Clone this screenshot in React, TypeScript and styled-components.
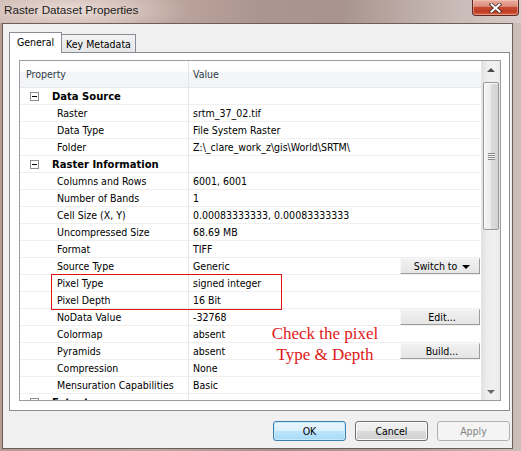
import React from 'react';
import styled, { createGlobalStyle, css } from 'styled-components';

type PropRow = { kind: 'prop'; name: string; value: string; action?: string; menu?: boolean };
type CatRow = { kind: 'cat'; label: string };
type GridRow = PropRow | CatRow;

const ROWS: GridRow[] = [
  { kind: 'cat', label: 'Data Source' },
  { kind: 'prop', name: 'Raster', value: 'srtm_37_02.tif' },
  { kind: 'prop', name: 'Data Type', value: 'File System Raster' },
  { kind: 'prop', name: 'Folder', value: 'Z:\\_clare_work_z\\gis\\World\\SRTM\\' },
  { kind: 'cat', label: 'Raster Information' },
  { kind: 'prop', name: 'Columns and Rows', value: '6001, 6001' },
  { kind: 'prop', name: 'Number of Bands', value: '1' },
  { kind: 'prop', name: 'Cell Size (X, Y)', value: '0.00083333333, 0.00083333333' },
  { kind: 'prop', name: 'Uncompressed Size', value: '68.69 MB' },
  { kind: 'prop', name: 'Format', value: 'TIFF' },
  { kind: 'prop', name: 'Source Type', value: 'Generic', action: 'Switch to', menu: true },
  { kind: 'prop', name: 'Pixel Type', value: 'signed integer' },
  { kind: 'prop', name: 'Pixel Depth', value: '16 Bit' },
  { kind: 'prop', name: 'NoData Value', value: '-32768', action: 'Edit...' },
  { kind: 'prop', name: 'Colormap', value: 'absent' },
  { kind: 'prop', name: 'Pyramids', value: 'absent', action: 'Build...' },
  { kind: 'prop', name: 'Compression', value: 'None' },
  { kind: 'prop', name: 'Mensuration Capabilities', value: 'Basic' },
  { kind: 'cat', label: 'Extent' },
];

const GlobalStyle = createGlobalStyle`
  html, body { margin: 0; padding: 0; }
  body {
    width: 521px;
    height: 451px;
    overflow: hidden;
    font-family: "DejaVu Sans Condensed", "Liberation Sans", Arial, sans-serif;
    font-size: 10.5px;
    color: #000;
  }
  * { box-sizing: border-box; }
`;

const Window = styled.div`
  width: 521px;
  height: 451px;
  display: flex;
  flex-direction: column;
  background: linear-gradient(90deg, #b59c94 0%, #bda79f 30%, #a8918a 55%, #b4a19c 80%, #cbbfbb 100%);
  overflow: hidden;
`;

const TitleBar = styled.div`
  height: 23px;
  flex: none;
  display: flex;
  justify-content: space-between;
  align-items: flex-start;
  background:
    radial-gradient(ellipse 120px 24px at 70px 10px, rgba(240, 228, 222, 0.85), rgba(240, 228, 222, 0) 100%),
    linear-gradient(90deg, #c9b3ab 0%, #c3aca4 25%, #ad958f 50%, #a8938d 65%, #c6b7b3 85%, #d6cbc8 100%);
`;

const TitleText = styled.div`
  padding: 3px 0 0 4px;
  font-family: "Liberation Sans", Arial, sans-serif;
  font-size: 11.7px;
  line-height: 14px;
  color: #1c1c1c;
`;

const CloseButton = styled.div`
  width: 47px;
  height: 16px;
  margin-right: 2px;
  border: 1px solid #5c2a22;
  border-top: none;
  border-radius: 0 0 4px 4px;
  background: linear-gradient(#e8ae9f 0%, #dc8d7b 42%, #c64a32 50%, #c13a22 78%, #d66c45 100%);
  display: flex;
  align-items: center;
  justify-content: center;
  box-shadow: inset 0 0 0 1px rgba(255, 210, 200, 0.45);
`;

const Client = styled.div`
  flex: 1;
  margin: 0 8px 2px 2px;
  border: 1px solid #6e5d58;
  background: #f0f0f0;
  padding: 8px 2px 0 6px;
  display: flex;
  flex-direction: column;
`;

const TabStrip = styled.div`
  height: 21px;
  margin-bottom: -1px;
  display: flex;
  align-items: flex-start;
  position: relative;
  z-index: 1;
`;

const Tab = styled.div<{ $active?: boolean }>`
  border: 1px solid #898c95;
  border-bottom: none;
  padding-top: 3px;
  line-height: 13px;
  text-align: center;
  ${(p) =>
    p.$active
      ? css`
          width: 53px;
          height: 21px;
          background: #fff;
        `
      : css`
          width: 75px;
          height: 18px;
          margin-top: 2px;
          margin-left: -1px;
          background: linear-gradient(#f3f3f3, #e6e6e6);
        `}
`;

const TabPanel = styled.div`
  width: 501px;
  height: 359px;
  border: 1px solid #898c95;
  background: #fff;
  padding: 7px 8px 9px 9px;
  flex: none;
`;

const Grid = styled.div`
  width: 482px;
  height: 341px;
  border: 1px solid #999ca3;
  display: flex;
`;

const GridPane = styled.div`
  flex: 1;
  position: relative;
  display: flex;
  flex-direction: column;
  overflow: hidden;
`;

const Header = styled.div`
  height: 27px;
  flex: none;
  display: flex;
  border-bottom: 1px solid #e8e8e8;
  background: linear-gradient(#ffffff 0%, #ffffff 40%, #f5f6f7 41%, #f3f4f5 100%);
  color: #2f3a48;
`;

const HeaderCell = styled.div<{ $first?: boolean }>`
  display: flex;
  align-items: center;
  ${(p) =>
    p.$first
      ? css`
          width: 169px;
          padding-left: 6px;
          border-right: 1px solid #e3e5e8;
        `
      : css`
          flex: 1;
          padding-left: 4px;
        `}
`;

const RowList = styled.div`
  flex: 1;
  overflow: hidden;
`;

const Row = styled.div`
  height: 17px;
  display: flex;
  border-bottom: 1px solid #efefef;
`;

const NameCell = styled.div<{ $category?: boolean }>`
  width: 169px;
  flex: none;
  display: flex;
  align-items: center;
  border-right: 1px solid #e6e6e6;
  white-space: nowrap;
  ${(p) =>
    p.$category
      ? css`
          padding-left: 10px;
          gap: 13px;
          font-family: "DejaVu Sans", "Liberation Sans", sans-serif;
          font-size: 10px;
          font-weight: bold;
        `
      : css`
          padding-left: 37px;
        `}
`;

const ExpandBox = styled.span`
  width: 9px;
  height: 9px;
  border: 1px solid #8d8d8d;
  background: #fff;
  position: relative;
  flex: none;
  &::after {
    content: '';
    position: absolute;
    left: 1px;
    top: 3px;
    width: 5px;
    height: 1px;
    background: #000;
  }
`;

const ValueCell = styled.div`
  flex: 1;
  display: flex;
  align-items: center;
  justify-content: space-between;
  padding-left: 4px;
  white-space: nowrap;
`;

const CellButton = styled.div`
  width: 80px;
  height: 16px;
  align-self: flex-start;
  margin-right: 1px;
  display: flex;
  align-items: center;
  justify-content: center;
  gap: 5px;
  background: linear-gradient(#f1f1f1, #e5e5e5);
  border-right: 1px solid #9c9c9c;
  border-bottom: 1px solid #9c9c9c;
  border-top: 1px solid #f8f8f8;
  border-left: 1px solid #f8f8f8;
  padding-left: 4px;
`;

const MenuArrow = styled.span`
  width: 0;
  height: 0;
  border-left: 4px solid transparent;
  border-right: 4px solid transparent;
  border-top: 4px solid #000;
  margin-top: 1px;
`;

const ScrollBar = styled.div`
  width: 19px;
  flex: none;
  display: flex;
  flex-direction: column;
  background: linear-gradient(90deg, #e2e2e2 0%, #eeeeee 30%, #f1f1f1 70%, #e8e8e8 100%);
  border-left: 1px solid #e6e6e6;
`;

const ScrollArrow = styled.div<{ $down?: boolean }>`
  height: 17px;
  flex: none;
  display: flex;
  align-items: center;
  justify-content: center;
  &::before {
    content: '';
    width: 0;
    height: 0;
    border-left: 4px solid transparent;
    border-right: 4px solid transparent;
    ${(p) =>
      p.$down
        ? css`
            border-top: 4px solid #6b6b6b;
          `
        : css`
            border-bottom: 4px solid #4a4a4a;
          `}
  }
`;

const ScrollTrack = styled.div`
  flex: 1;
  padding: 4px 1px 0 1px;
`;

const Thumb = styled.div`
  width: 16px;
  height: 148px;
  border: 1px solid #979797;
  border-radius: 2px;
  background: linear-gradient(90deg, #f4f4f4 0%, #ececec 50%, #dcdcdc 51%, #d3d3d3 100%);
  box-shadow: inset 1px 1px 0 #fbfbfb;
  display: flex;
  align-items: center;
  justify-content: center;
`;

const Grip = styled.div`
  width: 7px;
  height: 7px;
  background: repeating-linear-gradient(#8a8a8a 0 1px, #f2f2f2 1px 2px);
`;

const Highlight = styled.div`
  position: absolute;
  left: 31px;
  top: 213px;
  width: 231px;
  height: 36px;
  border: 1px solid #e31212;
  pointer-events: none;
`;

const Note = styled.div`
  position: absolute;
  left: 225px;
  top: 262px;
  width: 160px;
  text-align: center;
  font-family: "Liberation Serif", "Times New Roman", serif;
  font-size: 17px;
  line-height: 21px;
  color: #e01818;
  pointer-events: none;
`;

const ButtonRow = styled.div`
  margin-top: 10px;
  display: flex;
  justify-content: flex-end;
  gap: 9px;
`;

const DialogButton = styled.div<{ $variant?: 'default' | 'normal' | 'disabled' }>`
  width: 73px;
  height: 20px;
  border-radius: 3px;
  display: flex;
  align-items: center;
  justify-content: center;
  ${(p) =>
    p.$variant === 'default'
      ? css`
          border: 1px solid #3c7fb1;
          background: linear-gradient(#eaf6fd 0%, #d9f0fc 48%, #bee6fd 50%, #a7d9f5 100%);
          box-shadow: inset 0 0 0 1px #c5eafc;
        `
      : p.$variant === 'disabled'
      ? css`
          border: 1px solid #adb2b5;
          background: #f4f4f4;
          color: #838383;
        `
      : css`
          border: 1px solid #707070;
          background: linear-gradient(#f2f2f2 0%, #ebebeb 48%, #dddddd 50%, #cfcfcf 100%);
          box-shadow: inset 0 0 0 1px #fbfbfb;
        `}
`;

const CloseGlyph = () => (
  <svg width="13" height="10" viewBox="0 0 13 10">
    <path d="M2.5 1.5 L10.5 8.5 M10.5 1.5 L2.5 8.5" stroke="#3d2a26" strokeWidth="3.6" strokeLinecap="square" />
    <path d="M2.5 1.5 L10.5 8.5 M10.5 1.5 L2.5 8.5" stroke="#ffffff" strokeWidth="2" strokeLinecap="square" />
  </svg>
);

export default function App() {
  return (
    <>
      <GlobalStyle />
      <Window>
        <TitleBar>
          <TitleText>Raster Dataset Properties</TitleText>
          <CloseButton>
            <CloseGlyph />
          </CloseButton>
        </TitleBar>
        <Client>
          <TabStrip>
            <Tab $active>General</Tab>
            <Tab>Key Metadata</Tab>
          </TabStrip>
          <TabPanel>
            <Grid>
              <GridPane>
                <Header>
                  <HeaderCell $first>Property</HeaderCell>
                  <HeaderCell>Value</HeaderCell>
                </Header>
                <RowList>
                  {ROWS.map((r, i) =>
                    r.kind === 'cat' ? (
                      <Row key={i}>
                        <NameCell $category>
                          <ExpandBox />
                          {r.label}
                        </NameCell>
                        <ValueCell />
                      </Row>
                    ) : (
                      <Row key={i}>
                        <NameCell>{r.name}</NameCell>
                        <ValueCell>
                          <span>{r.value}</span>
                          {r.action && (
                            <CellButton>
                              {r.action}
                              {r.menu && <MenuArrow />}
                            </CellButton>
                          )}
                        </ValueCell>
                      </Row>
                    )
                  )}
                </RowList>
                <Highlight />
                <Note>
                  Check the pixel
                  <br />
                  Type &amp; Depth
                </Note>
              </GridPane>
              <ScrollBar>
                <ScrollArrow />
                <ScrollTrack>
                  <Thumb>
                    <Grip />
                  </Thumb>
                </ScrollTrack>
                <ScrollArrow $down />
              </ScrollBar>
            </Grid>
          </TabPanel>
          <ButtonRow>
            <DialogButton $variant="default">OK</DialogButton>
            <DialogButton>Cancel</DialogButton>
            <DialogButton $variant="disabled">Apply</DialogButton>
          </ButtonRow>
        </Client>
      </Window>
    </>
  );
}
